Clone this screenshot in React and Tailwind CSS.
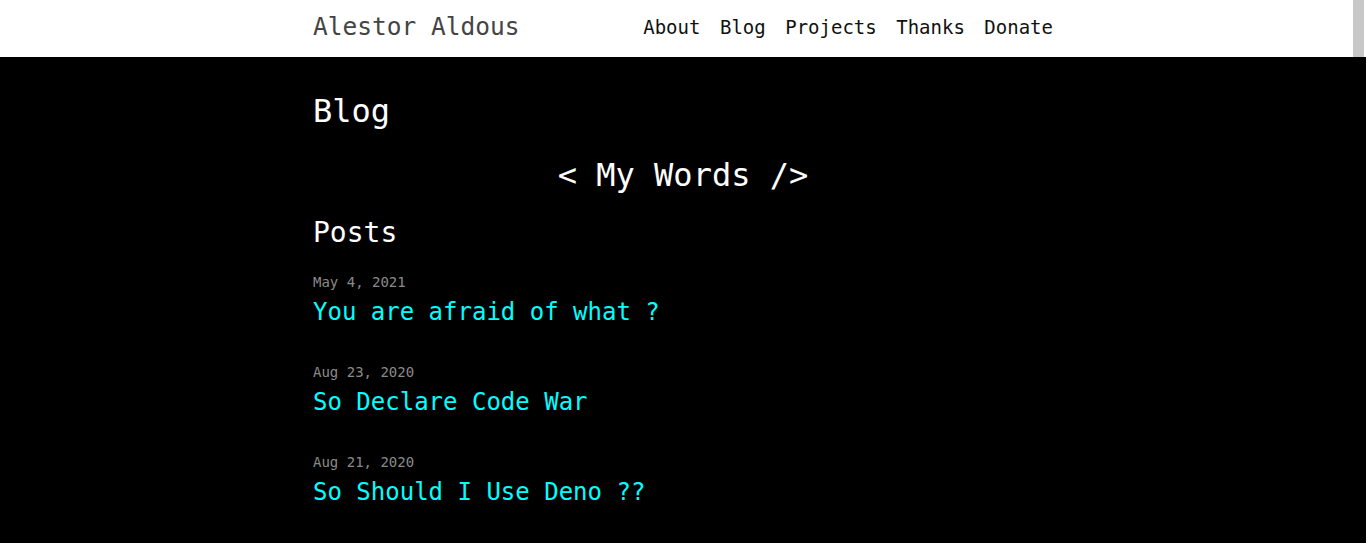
const posts = [
  { date: "May 4, 2021", title: "You are afraid of what ?" },
  { date: "Aug 23, 2020", title: "So Declare Code War" },
  { date: "Aug 21, 2020", title: "So Should I Use Deno ??" },
];

const links = ["About", "Blog", "Projects", "Thanks", "Donate"];

function App() {
  return (
    <div className="min-h-screen bg-black font-['DejaVu_Sans_Mono',monospace]">
      <header className="relative h-[57px] bg-white">
        <div className="mx-auto flex h-full w-[740px] items-center justify-between">
          <a className="text-[24.5px] leading-[32px] text-[#444] mt-[-3px]">Alestor Aldous</a>
          <nav className="flex gap-[19.5px] text-[19px] leading-[24px] text-[#111] mt-[-4px]">
            {links.map((l) => (
              <a key={l}>{l}</a>
            ))}
          </nav>
        </div>
        {/* scrollbar thumb */}
        <div className="absolute right-[2px] top-0 h-full w-[11px] bg-[#c8c8c8]" />
      </header>

      <main className="mx-auto w-[740px] pt-[34px] pb-10">
        <h1 className="text-[32px] leading-[40px] text-white">Blog</h1>
        <h2 className="mt-[24px] text-center text-[32px] leading-[40px] text-white">
          &lt; My Words /&gt;
        </h2>
        <h3 className="mt-[20px] text-[28px] leading-[36px] text-white">Posts</h3>

        <ul className="mt-[21px] flex flex-col gap-[34px]">
          {posts.map((p) => (
            <li key={p.title}>
              <p className="text-[14px] leading-[20px] text-[#8a8a8a]">{p.date}</p>
              <a className="mt-[4px] block text-[24px] leading-[32px] text-[#00ffff]">
                {p.title}
              </a>
            </li>
          ))}
        </ul>
      </main>
    </div>
  );
}

export default App;
